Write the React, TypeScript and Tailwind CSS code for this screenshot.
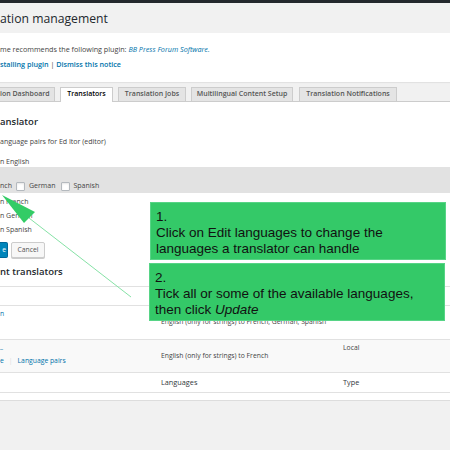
const tabs = [
  { label: "ion Dashboard", w: "w-[55px]", ml: "ml-0", first: true },
  { label: "Translators", w: "w-[53px]", ml: "ml-[5px]", active: true },
  { label: "Translation Jobs", w: "w-[68px]", ml: "ml-[5px]" },
  { label: "Multilingual Content Setup", w: "w-[102px]", ml: "ml-[5px]" },
  { label: "Translation Notifications", w: "w-[98px]", ml: "ml-[6px]" },
];

function Tabs() {
  return (
    <div className="flex h-[20px] items-end border-b border-[#ccc]">
      {tabs.map((t) => (
        <div
          key={t.label}
          className={`${t.w} ${t.ml} flex shrink-0 items-center whitespace-nowrap border border-b-0 border-[#ccc] text-[7px] font-semibold ${
            t.first ? "justify-start border-l-0" : "justify-center"
          } ${t.active ? "relative -mb-px h-[15px] bg-white pb-px text-[#000]" : "h-[14px] bg-[#e4e4e4] text-[#555]"}`}
        >
          {t.label}
        </div>
      ))}
    </div>
  );
}

function Checkbox() {
  return <span className="block h-[9px] w-[9px] rounded-[1px] border border-[#b4b9be] bg-white shadow-[inset_0_1px_2px_rgba(0,0,0,0.1)]" />;
}

function Content() {
  return (
    <div className="flex flex-col border-b border-[#ddd] bg-white text-[7px]">
      <div className="h-[13px]" />
      <h3 className="h-[13px] text-[9.5px] leading-[13px] font-semibold text-[#23282d]">anslator</h3>
      <p className="mt-[8px] h-[11px] leading-[11px]">anguage pairs for Ed Itor (editor)</p>
      <p className="mt-[9px] h-[11px] leading-[11px]">n English</p>
      <div className="h-[26px] bg-[#e2e2e2] pt-[13px]">
        <div className="flex h-[12px] items-center">
          <span>nch</span>
          <span className="ml-[4px]"><Checkbox /></span>
          <span className="ml-[4px]">German</span>
          <span className="ml-[5px]"><Checkbox /></span>
          <span className="ml-[4px]">Spanish</span>
        </div>
      </div>
      <div className="mt-[2px] leading-[14px]">
        <p>n French</p>
        <p>n German</p>
        <p>n Spanish</p>
      </div>
      <div className="mt-[5px] flex h-[16px] items-stretch">
        <button className="w-[8px] rounded-r-[2px] border border-l-0 border-[#006799] bg-[#0085ba] pr-[1px] text-right text-[6.8px] text-white">
          e
        </button>
        <button className="ml-[3px] w-[34px] rounded-[2px] border border-[#ccc] bg-[#f7f7f7] text-[6.8px] text-[#555] shadow-[0_1px_0_#ccc]">
          Cancel
        </button>
      </div>
      <h3 className="mt-[7px] h-[13px] text-[9.5px] leading-[13px] font-semibold text-[#23282d]">nt translators</h3>
      <div className="mt-[8px] border-t border-[#e1e1e1] text-[6.8px]">
        <div className="h-[19px] border-b border-[#e1e1e1]" />
        <div className="grid h-[34px] grid-cols-[161px_182px_1fr] border-b border-[#e1e1e1]">
          <div className="pt-[2px] leading-[12px] text-[#0073aa]">n</div>
          <div className="flex items-center">English (only for strings) to French, German, Spanish</div>
          <div />
        </div>
        <div className="grid h-[33px] grid-cols-[161px_182px_1fr] border-b border-[#e1e1e1] bg-[#f9f9f9]">
          <div className="leading-[14px] text-[#0073aa]">
            <p>_</p>
            <p>
              e<span className="mx-[5px] text-[#ddd]">|</span>Language pairs
            </p>
          </div>
          <div className="flex items-center">English (only for strings) to French</div>
          <div className="pt-[1px] leading-[14px]">Local</div>
        </div>
        <div className="grid h-[20px] grid-cols-[161px_182px_1fr] items-center border-b border-[#e1e1e1] text-[7.3px] text-[#32373c]">
          <div />
          <div>Languages</div>
          <div>Type</div>
        </div>
      </div>
      <div className="h-[7px]" />
    </div>
  );
}

function Callouts() {
  return (
    <>
      <svg className="pointer-events-none absolute left-0 top-0" width="450" height="450">
        <line x1="29" y1="218" x2="131" y2="297" stroke="#86e2a6" strokeWidth="1" />
        <polygon points="2,195 35,212 24,223" fill="#33cc66" />
      </svg>
      <div className="absolute left-[150px] top-[202px] h-[58px] w-[296px] border border-[#57d486] bg-[#34c968] pl-[5px] pt-[6px] font-['Liberation_Sans',Arial,sans-serif] text-[13.5px] leading-[16px] text-[#111]">
        <p>1.</p>
        <p>Click on Edit languages to change the</p>
        <p>languages a translator can handle</p>
      </div>
      <div className="absolute left-[149px] top-[263px] h-[58px] w-[296px] border border-[#57d486] bg-[#34c968] pl-[5px] pt-[6px] font-['Liberation_Sans',Arial,sans-serif] text-[13.5px] leading-[16px] text-[#111]">
        <p>2.</p>
        <p>Tick all or some of the available languages,</p>
        <p>
          then click <i>Update</i>
        </p>
      </div>
    </>
  );
}

export default function App() {
  return (
    <div className="relative h-[450px] w-[450px] overflow-hidden bg-[#f1f1f1] font-['Open_Sans',sans-serif] text-[#444]">
      <div className="h-[3px] bg-[#23282d]" />
      <h1 className="h-[30px] pt-[10px] text-[12.2px] leading-[12px] text-[#23282d]">ation management</h1>
      <div className="h-[49px] bg-white pt-[9px] text-[7.2px] leading-[15px] shadow-[0_1px_1px_rgba(0,0,0,0.06)]">
        <p>
          me recommends the following plugin: <i className="text-[#0073aa]">BB Press Forum Software.</i>
        </p>
        <p className="font-semibold text-[#0073aa]">
          stalling plugin <span className="font-normal text-[#444]">|</span> Dismiss this notice
        </p>
      </div>
      <Tabs />
      <Content />
      <Callouts />
    </div>
  );
}
